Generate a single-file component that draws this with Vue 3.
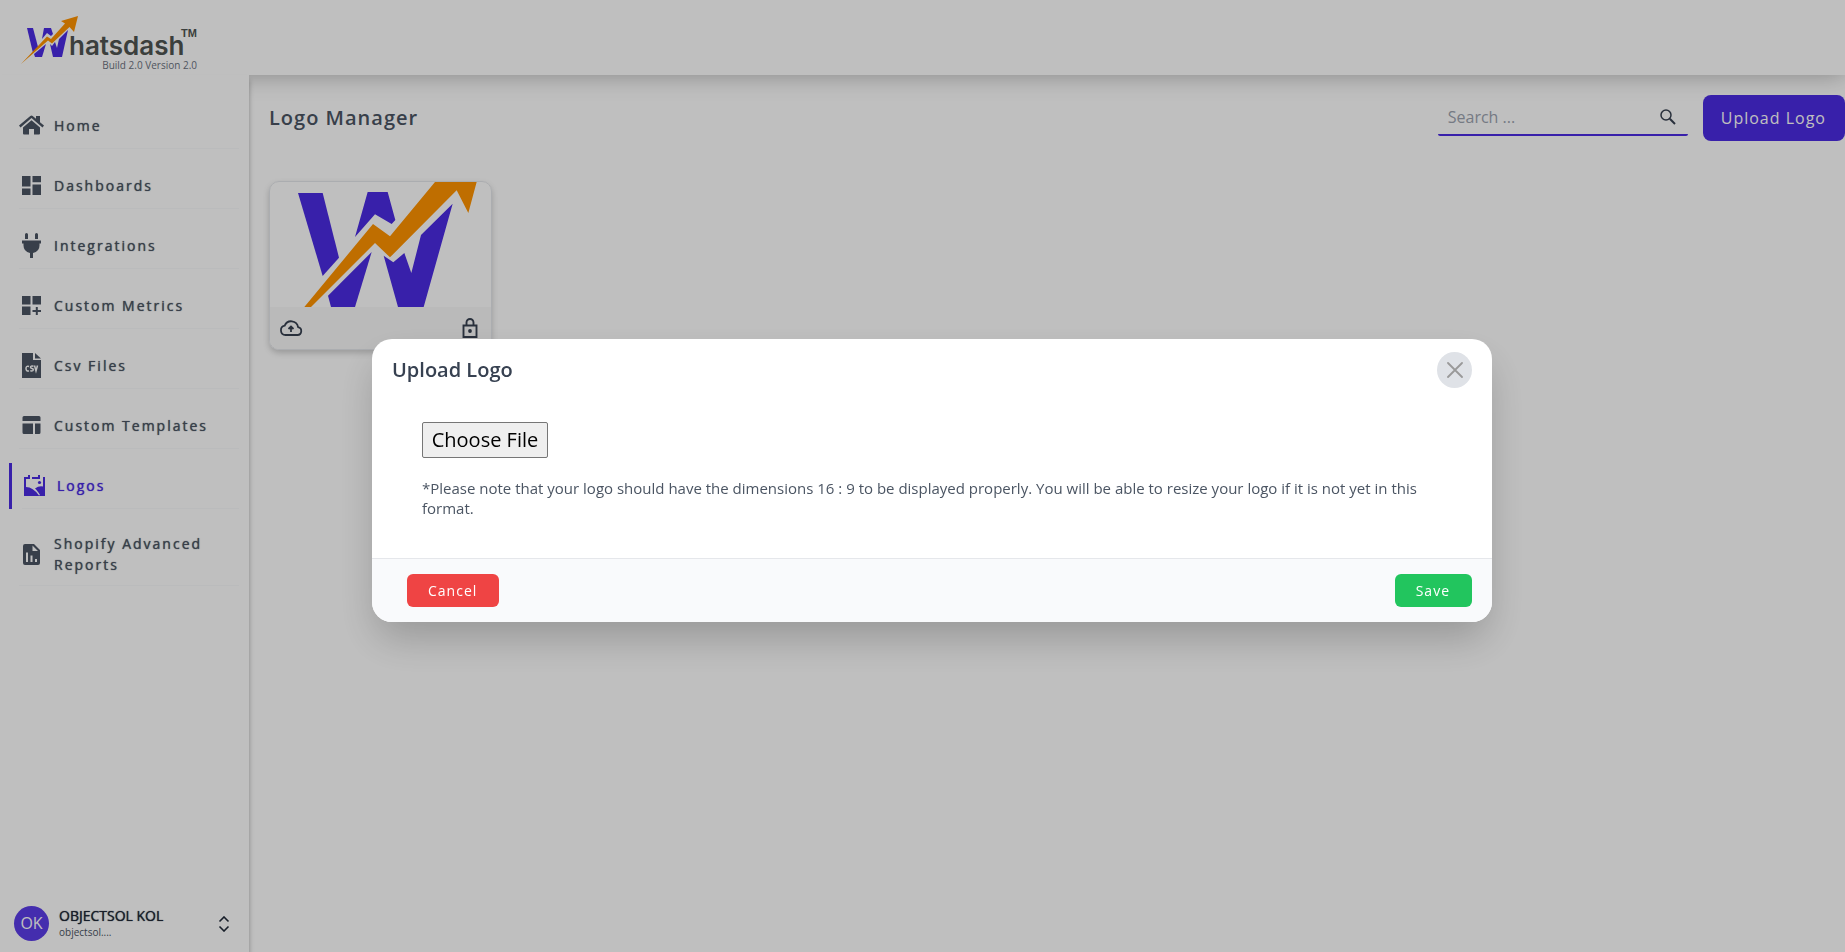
<script setup>
import { ref } from "vue";

const showModal = ref(true);
const search = ref("");

const menu = [
  { name: "Home", icon: "home" },
  { name: "Dashboards", icon: "dashboard" },
  { name: "Integrations", icon: "plug" },
  { name: "Custom Metrics", icon: "metrics" },
  { name: "Csv Files", icon: "csv" },
  { name: "Custom Templates", icon: "template" },
  { name: "Logos", icon: "logos", active: true },
  { name: "Shopify Advanced Reports", icon: "report" },
];

const icons = {
  home: "M12.5 7.2 4 14.6V20.5q0 1 1 1h5v-5.5h5v5.5h5q1 0 1-1v-5.9zM0 12.6 11.3 2.9q1.2-.9 2.4 0L17 5.7V3h4v6.2l4 3.4-1.5 1.8L12.5 5.1 1.5 14.4z",
  dashboard: "M3 3h8.5v10.5H3zM13.5 3H22v6.2h-8.5zM3 15.5h8.5V22H3zM13.5 11.5H22V22h-8.5z",
  plug: "M6 1.5q0-1.5 1.5-1.5t1.5 1.5V6H6zM16 1.5q0-1.5 1.5-1.5T19 1.5V6h-3zM3 7.5h19v3h-1.5v2q0 6-6.5 7.5v5h-3v-5q-6.5-1.5-6.5-7.5v-2H3z",
  metrics: "M3 3h8.5v8.5H3zM13.5 3H22v8.5h-8.5zM3 13.5h8.5V22H3zM16.8 14h2v3H22v2h-3.2v3h-2v-3h-3.3v-2h3.3z",
  template: "M5 3h15q1.5 0 1.5 1.5V8h-18V4.5Q3.5 3 5 3zM3.5 10.5H14V21H5q-1.5 0-1.5-1.5zM16 10.5h5.5v9q0 1.5-1.5 1.5h-4z",
};
</script>

<template>
  <div class="page">
    <header class="topbar">
      <div class="brand">
        <svg class="brand-logo" viewBox="0 0 186 55" role="img" aria-label="Whatsdash">
          <g fill="#4b2be3">
            <path d="M12 14H18L23 33 18 39z" />
            <path d="M29 14H36L38 20 36 22 32 19 27 25z" />
            <path d="M31 30 27 43H20L19 40z" />
            <path d="M35 30 37 32 40 28 42 34 44 25 53 16 47 43H38z" />
          </g>
          <path fill="#ff9300" d="M6 50 32 22.5 36 25 50 9.5 46 7 63 2 59 18 54.5 13 37 29.5 33 26.5z" />
          <text class="brand-name" x="54" y="41">hatsdash</text>
          <text class="brand-tm" x="166" y="23">TM</text>
        </svg>
        <span class="version">Build 2.0 Version 2.0</span>
      </div>
    </header>

    <div class="body">
      <aside class="sidebar">
        <nav class="menu">
          <a
            v-for="item in menu"
            :key="item.name"
            href="#"
            class="menu-link"
            :class="{ active: item.active }"
          >
            <span class="menu-item">
              <svg class="menu-icon" viewBox="0 0 25 25" fill="currentColor" aria-hidden="true">
                <path v-if="icons[item.icon]" :d="icons[item.icon]" />
                <template v-else-if="item.icon === 'csv'">
                  <path d="M3 0h11v7h8v18H3z" />
                  <path d="M16 0l6 5.5h-6z" />
                  <path
                    d="M10 13.5q-3-1-3 2t3 2.5M14.5 13.2q-3-.7-3 1 0 1 1.5 1.3t1.3 1.5-3 .8M15.5 12.5l1.5 5.5 1.5-5.5"
                    fill="none"
                    stroke="#fff"
                    stroke-width="1.5"
                  />
                </template>
                <template v-else-if="item.icon === 'logos'">
                  <path d="M2 4h4V2h2v4H4v8q7 0 13 8.5l1-.5q-3-5-5-6.5 4-3 8-2V4h2v19H2z" />
                  <path d="M10 4h6V2h2v4h-8z" />
                  <circle cx="17.5" cy="9.5" r="1.6" />
                </template>
                <template v-else>
                  <path fill-rule="evenodd" d="M6 2h9l6 6v13q0 2-2 2H6q-2 0-2-2V4q0-2 2-2zM13.5 3.5V9H19zM7 10.5h2V20H7zM11.5 13.5h2V20h-2zM16 17h2v3h-2z" />
                </template>
              </svg>
              <span>{{ item.name }}</span>
            </span>
          </a>
        </nav>

        <div class="user">
          <span class="avatar">OK</span>
          <div class="user-info">
            <p class="user-name">OBJECTSOL KOL</p>
            <p class="user-mail">objectsol....</p>
          </div>
          <button class="user-toggle" aria-label="Account menu">
            <svg viewBox="0 0 12 16" fill="none" stroke="currentColor" stroke-width="1.6">
              <path d="M1.5 5.5 6 1l4.5 4.5M1.5 10.5 6 15l4.5-4.5" />
            </svg>
          </button>
        </div>
      </aside>

      <main class="content">
        <div class="toolbar">
          <h1 class="title">Logo Manager</h1>
          <div class="search">
            <input v-model="search" type="text" placeholder="Search ..." aria-label="Search" />
            <svg viewBox="0 0 16 16" fill="none" stroke="currentColor" stroke-width="1.5" aria-hidden="true">
              <circle cx="6" cy="6" r="5" />
              <path d="M9.8 9.8 15 15" stroke-width="2" />
            </svg>
          </div>
          <button class="upload-button" @click="showModal = true">Upload Logo</button>
        </div>

        <div class="card">
          <svg class="card-image" viewBox="45 36 663 375" role="img" aria-label="Logo">
            <g fill="#4b2be3">
              <path d="M129 69H203L252 263 203 318z" />
              <path d="M338 66H398L421 150 410 162 360 133 300 201z" />
              <path d="M350 246 300 411H228L219 377z" />
              <path d="M386 257 415 277 448 249 469 309 498 195 593 101 506 411H429z" />
            </g>
            <path fill="#ff9300" d="M148 411 354 162 405 199 540 36H665L640 129 605 61 405 262 360 219 168 411z" />
          </svg>
          <div class="card-footer">
            <button class="icon-button" aria-label="Use logo">
              <svg class="cloud" viewBox="0 0 24 24" fill="none" stroke="currentColor" stroke-width="1.8">
                <path d="M6.5 19h12a4 4 0 0 0 .6-7.9 7 7 0 0 0-13.4-1.4A4.7 4.7 0 0 0 6.5 19z" />
                <path d="M12 16v-5M9.5 13 12 10.5l2.5 2.5" />
              </svg>
            </button>
            <button class="icon-button" aria-label="Locked">
              <svg class="lock" viewBox="0 0 16 20" fill="none" stroke="currentColor" stroke-width="1.9">
                <path d="M1.5 7.5h13V19h-13zM4.5 7.5V4.5a3.5 3.5 0 0 1 7 0v3" />
                <circle cx="8" cy="13" r="1.9" fill="currentColor" stroke="none" />
              </svg>
            </button>
          </div>
        </div>
      </main>
    </div>

    <div v-if="showModal" class="overlay">
      <div class="modal" role="dialog" aria-labelledby="modal-title">
        <div class="modal-header">
          <h2 id="modal-title">Upload Logo</h2>
          <button class="close-button" aria-label="Close" @click="showModal = false">
            <svg viewBox="0 0 16 16" fill="none" stroke="currentColor" stroke-width="1.8" stroke-linecap="round">
              <path d="M1 1l14 14M15 1 1 15" />
            </svg>
          </button>
        </div>
        <div class="modal-body">
          <input class="file-input" type="file" accept="image/*" aria-label="Logo file" />
          <p class="note">
            *Please note that your logo should have the dimensions 16 : 9 to be displayed properly. You will be able to
            resize your logo if it is not yet in this format.
          </p>
        </div>
        <div class="modal-footer">
          <button class="button cancel" @click="showModal = false">Cancel</button>
          <button class="button save">Save</button>
        </div>
      </div>
    </div>
  </div>
</template>

<style>
body {
  margin: 0;
  background-color: #fff;
}
</style>

<style scoped>
.page {
  min-height: 100vh;
  display: flex;
  flex-direction: column;
  font-family: "Open Sans", sans-serif;
  color: #4b5563;
}
h1,
h2,
p {
  margin: 0;
}
button,
input {
  font-family: inherit;
  border: none;
  padding: 0;
}
button {
  cursor: pointer;
}
.topbar {
  height: 75px;
  box-sizing: border-box;
  padding: 14px 15px 0;
  box-shadow: 0 0 25px rgba(0, 0, 0, 0.3);
}
.brand {
  display: flex;
  flex-direction: column;
  width: 186px;
}
.brand-logo {
  width: 186px;
  height: 55px;
}
.brand-name {
  font-family: Inter, sans-serif;
  font-size: 26px;
  font-weight: 600;
  fill: #4f5552;
}
.brand-tm {
  font-family: "Liberation Sans", sans-serif;
  font-size: 11px;
  font-weight: bold;
  fill: #4f5552;
}
.version {
  margin-top: -12px;
  align-self: flex-end;
  padding-right: 4px;
  font-size: 10px;
  line-height: 16px;
  color: #6b7280;
}
.body {
  flex: 1;
  display: flex;
}
.sidebar {
  width: 249px;
  flex-shrink: 0;
  box-sizing: border-box;
  display: flex;
  flex-direction: column;
  justify-content: space-between;
  padding: 28px 10px 11px 9px;
  background-color: #fff;
  box-shadow: 0 5px 5px rgba(0, 0, 0, 0.3);
  position: relative;
}
.menu {
  display: flex;
  flex-direction: column;
  gap: 14px;
}
.menu-link {
  display: block;
  padding-left: 10px;
  color: #4b5563;
  text-decoration: none;
}
.menu-link.active {
  border-left: 3px solid #4b2be3;
  color: #4b2be3;
}
.menu-item {
  display: flex;
  align-items: center;
  gap: 10px;
  padding: 10px 0;
  border-bottom: 1px solid #f9fafb;
  font-size: 14px;
  line-height: 21px;
  letter-spacing: 2px;
  text-shadow: 0 0 1px currentColor;
}
.menu-icon {
  width: 25px;
  height: 25px;
  flex-shrink: 0;
}
.user {
  display: flex;
  align-items: center;
  padding: 0 9px 0 5px;
}
.avatar {
  width: 35px;
  height: 35px;
  border-radius: 50%;
  background-color: #5b3ce8;
  color: #fff;
  font-size: 16px;
  line-height: 35px;
  text-align: center;
}
.user-info {
  flex: 1;
  padding: 0 0 2px 10px;
}
.user-name {
  font-size: 14px;
  line-height: 18px;
  color: #1f2937;
  text-shadow: 0 0 1px currentColor;
}
.user-mail {
  font-size: 10px;
  line-height: 14px;
}
.user-toggle {
  background: none;
  color: #1f2937;
}
.user-toggle svg {
  display: block;
  width: 12px;
  height: 16px;
}
.content {
  flex: 1;
  padding: 20px 0 0 20px;
}
.toolbar {
  display: flex;
  align-items: center;
}
.title {
  flex: 1;
  font-size: 20px;
  font-weight: 600;
  line-height: 26px;
  letter-spacing: 1px;
}
.search {
  width: 250px;
  height: 36px;
  box-sizing: border-box;
  margin-right: 15px;
  padding: 0 12px 0 10px;
  display: flex;
  align-items: center;
  border-bottom: 2px solid #4b2be3;
  border-radius: 2px;
  color: #374151;
}
.search input {
  flex: 1;
  min-width: 0;
  background: none;
  outline: none;
  font-size: 16px;
}
.search input::placeholder {
  color: #9ca3af;
}
.search svg {
  width: 16px;
  height: 16px;
}
.upload-button {
  height: 46px;
  padding: 0 19px 0 18px;
  border-radius: 8px;
  background-color: #4b2be3;
  color: #fff;
  font-size: 16px;
  letter-spacing: 1px;
}
.card {
  width: 221px;
  margin-top: 40px;
  border: 1px solid #e5e7eb;
  border-radius: 10px;
  overflow: hidden;
  box-shadow: 0 3px 6px rgba(0, 0, 0, 0.2);
}
.card-image {
  display: block;
  width: 100%;
}
.card-footer {
  display: flex;
  justify-content: space-between;
  align-items: center;
  height: 42px;
  padding: 0 11px 0 9px;
  background-color: #f9f9f9;
}
.icon-button {
  background: none;
  color: #374151;
}
.icon-button svg {
  display: block;
}
.cloud {
  width: 24px;
  height: 24px;
}
.lock {
  width: 20px;
  height: 20px;
}
.overlay {
  position: fixed;
  inset: 0;
  display: flex;
  align-items: center;
  justify-content: center;
  background-color: rgba(0, 0, 0, 0.25);
}
.modal {
  width: 1120px;
  max-width: 90%;
  margin-left: 19px;
  margin-top: 9px;
  background-color: #fff;
  border-radius: 20px;
  overflow: hidden;
  box-shadow: 0 20px 40px -5px rgba(0, 0, 0, 0.22);
}
.modal-header {
  display: flex;
  justify-content: space-between;
  align-items: center;
  padding: 13px 20px 0;
}
.modal-header h2 {
  font-size: 20px;
  font-weight: 600;
  line-height: 26px;
  color: #374151;
}
.close-button {
  width: 35px;
  height: 36px;
  border-radius: 50%;
  background-color: #dfe2e7;
  color: #999;
  display: flex;
  align-items: center;
  justify-content: center;
}
.close-button svg {
  width: 16px;
  height: 16px;
}
.modal-body {
  padding: 34px 50px 40px;
}
.file-input {
  display: block;
  width: 126px;
  overflow: hidden;
  font-size: 20px;
}
.file-input::file-selector-button {
  box-sizing: border-box;
  width: 126px;
  height: 36px;
  margin: 0;
  padding: 0 8px 2px;
  border: 1px solid #767676;
  border-radius: 2px;
  background-color: #efefef;
  color: #000;
  font-family: inherit;
  font-size: 20px;
}
.note {
  margin-top: 20px;
  font-size: 15px;
  line-height: 20px;
}
.modal-footer {
  display: flex;
  justify-content: space-between;
  padding: 15px 20px 15px 35px;
  border-top: 1px solid #e5e7eb;
  background-color: #f9fafc;
}
.button {
  height: 33px;
  padding: 0 22px 0 21px;
  border-radius: 6px;
  color: #fff;
  font-size: 14px;
  letter-spacing: 1px;
}
.cancel {
  background-color: #ef4444;
}
.save {
  background-color: #22c55e;
}
</style>
